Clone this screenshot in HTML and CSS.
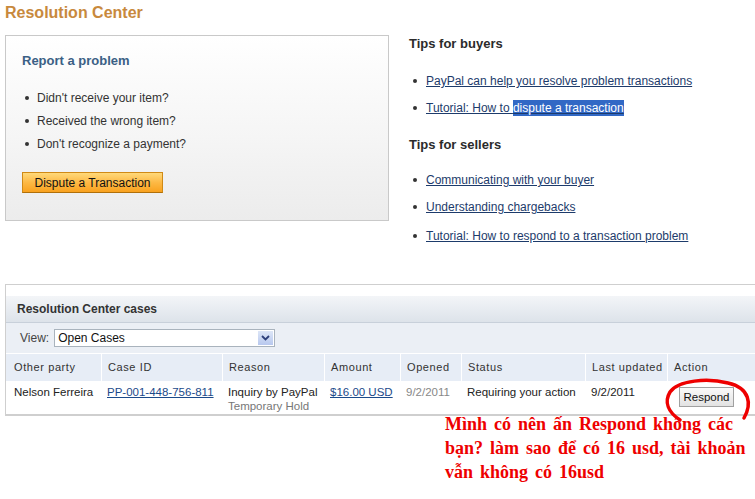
FILE: index.html
```html
<!DOCTYPE html>
<html>
<head>
<meta charset="utf-8">
<link rel="stylesheet" href="styles.css">
</head>
<body>
<div class="page">
  <h1 class="title">Resolution Center</h1>
  <div class="top">
    <div class="report">
      <h2 class="report-title">Report a problem</h2>
      <ul class="plain-list">
        <li>Didn't receive your item?</li>
        <li>Received the wrong item?</li>
        <li>Don't recognize a payment?</li>
      </ul>
      <button class="dispute-btn">Dispute a Transaction</button>
    </div>
    <div class="tips">
      <h3 class="tips-title">Tips for buyers</h3>
      <ul class="link-list">
        <li><a href="#">PayPal can help you resolve problem transactions</a></li>
        <li><a href="#">Tutorial: How to <span class="sel">dispute a transaction</span></a></li>
      </ul>
      <h3 class="tips-title sellers">Tips for sellers</h3>
      <ul class="link-list second">
        <li><a href="#">Communicating with your buyer</a></li>
        <li><a href="#">Understanding chargebacks</a></li>
        <li class="last"><a href="#">Tutorial: How to respond to a transaction problem</a></li>
      </ul>
    </div>
  </div>

  <div class="cases">
    <div class="cases-head">Resolution Center cases</div>
    <div class="view-row">
      <span class="view-label">View:</span>
      <div class="select">
        <span>Open Cases</span>
        <span class="select-btn"><svg width="9" height="6" viewBox="0 0 9 6"><path d="M1 1 L4.5 4.5 L8 1" fill="none" stroke="#2d3f7a" stroke-width="1.8"/></svg></span>
      </div>
    </div>
    <div class="grid">
      <div class="th c1">Other party</div>
      <div class="th c2">Case ID</div>
      <div class="th c3">Reason</div>
      <div class="th c4">Amount</div>
      <div class="th c5">Opened</div>
      <div class="th c6">Status</div>
      <div class="th c7">Last updated</div>
      <div class="th c8">Action</div>

      <div class="td first">Nelson Ferreira</div>
      <div class="td"><a href="#">PP-001-448-756-811</a></div>
      <div class="td">Inquiry by PayPal<div class="sub">Temporary Hold</div></div>
      <div class="td"><a href="#">$16.00 USD</a></div>
      <div class="td muted">9/2/2011</div>
      <div class="td">Requiring your action</div>
      <div class="td">9/2/2011</div>
      <div class="td action"><button class="respond-btn">Respond</button></div>
    </div>
  </div>

  <svg class="scribble" width="100" height="50" viewBox="0 0 100 50">
    <path d="M82 44 C90 30, 88 14, 66 9 C46 4, 16 6, 8 18 C2 28, 6 38, 18 46" fill="none" stroke="#ee0000" stroke-width="3.5" stroke-linecap="round"/>
  </svg>
  <div class="note">Mình có nên ấn Respond không các bạn? làm sao để có 16 usd, tài khoản vẫn không có 16usd</div>
</div>
</body>
</html>
```

FILE: styles.css
```css
* { box-sizing: border-box; }
html, body { margin: 0; padding: 0; background: #fff; }
body { font-family: "Liberation Sans", Arial, sans-serif; color: #333; width: 755px; height: 499px; overflow: hidden; }
.page { position: relative; padding-left: 5px; }

.title { margin: 0; height: 35px; padding-top: 4px; font-size: 16px; line-height: 18px; font-weight: bold; color: #c8893d; }

.top { display: flex; align-items: flex-start; height: 186px; }
.report {
  width: 384px; height: 186px;
  border: 1px solid #c9c9c9;
  background: linear-gradient(#ffffff, #f5f5f5 55%, #ececec);
  padding: 17px 0 0 16px;
}
.report-title { margin: 0; font-size: 13px; line-height: 16px; font-weight: bold; color: #3b6085; }
.plain-list { list-style: none; margin: 22px 0 0 0; padding: 0; }
.plain-list li, .link-list li { position: relative; padding-left: 15px; font-size: 12px; line-height: 14px; }
.plain-list li + li { margin-top: 9px; }
.plain-list li::before, .link-list li::before {
  content: ""; position: absolute; left: 3px; top: 5px; width: 4px; height: 4px; border-radius: 50%; background: #333;
}
.dispute-btn {
  margin-top: 21px; width: 141px; height: 21px; padding: 0;
  font-family: "Liberation Sans", Arial, sans-serif; font-size: 12px; color: #111;
  border: 1px solid #d08a16; border-bottom-color: #b0700a;
  background: linear-gradient(#ffd97a, #fdb945 50%, #f9a21f);
}

.tips { margin-left: 20px; padding-top: 1px; }
.tips-title { margin: 0; font-size: 13px; line-height: 16px; font-weight: bold; color: #2b2b2b; }
.tips-title.sellers { margin-top: 22px; }
.link-list { list-style: none; margin: 22px 0 0 0; padding: 0; }
.link-list.second { margin-top: 20px; }
.link-list li { padding-left: 17px; }
.link-list li + li { margin-top: 13px; }
.link-list li.last { margin-top: 15px; }
.link-list li::before { left: 4px; }
.link-list a { color: #1d3b6b; text-decoration: underline; }
.sel { background: #3168c5; color: #fff; padding: 1px 0; }

.cases {
  margin-top: 63px; width: 750px;
  border-top: 1px solid #cfcfcf; border-left: 1px solid #cfcfcf; border-bottom: 2px solid #cfcfcf;
  padding-top: 11px;
}
.cases-head {
  height: 27px; padding: 6px 0 0 11px;
  font-size: 12px; font-weight: bold; color: #333;
  background: linear-gradient(#f3f5f8, #dde3ea);
  border-bottom: 1px solid #c8d0da;
}
.view-row { height: 31px; background: #ebeff5; display: flex; align-items: center; padding-left: 14px; border-bottom: 1px solid #fff; }
.view-label { font-size: 12px; color: #444; margin-right: 5px; }
.select {
  width: 221px; height: 18px; background: #fff; border: 1px solid #a9b3bd;
  display: flex; align-items: center; justify-content: space-between;
  font-size: 12px; color: #111; padding-left: 3px;
}
.select-btn {
  width: 15px; height: 14px; margin-right: 1px;
  background: linear-gradient(#dde6f7, #b8c8ee); display: flex; align-items: center; justify-content: center;
}

.grid { display: grid; grid-template-columns: 95px 121px 102px 76px 61px 124px 82px 1fr; }
.th {
  height: 27px; background: #e7edf6; border-left: 1px solid #fff;
  font-size: 11px; letter-spacing: 0.6px; color: #333; padding: 7px 0 0 6px;
}
.th.c1 { border-left: none; padding-left: 8px; }
.td { height: 33px; font-size: 11.5px; color: #222; padding: 4px 0 0 6px; line-height: 14px; }
.td.first { padding-left: 8px; }
.td a { color: #1b4a8a; text-decoration: underline; }
.td .sub { color: #777; }
.td.muted { color: #888; }
.td.action { padding: 6px 0 0 12px; }
.respond-btn {
  width: 55px; height: 20px; padding: 0;
  font-family: "Liberation Sans", Arial, sans-serif; font-size: 11.5px; color: #111;
  border: 1px solid #a0a0a0; background: linear-gradient(#fafafa, #e2e2e2);
}

.scribble { position: absolute; left: 662px; top: 374px; }
.note {
  position: absolute; left: 445px; top: 412px; width: 312px;
  font-family: "Liberation Serif", "Times New Roman", serif; font-weight: bold;
  font-size: 18px; word-spacing: 2.5px; line-height: 24px; color: #ee0000;
}
```
